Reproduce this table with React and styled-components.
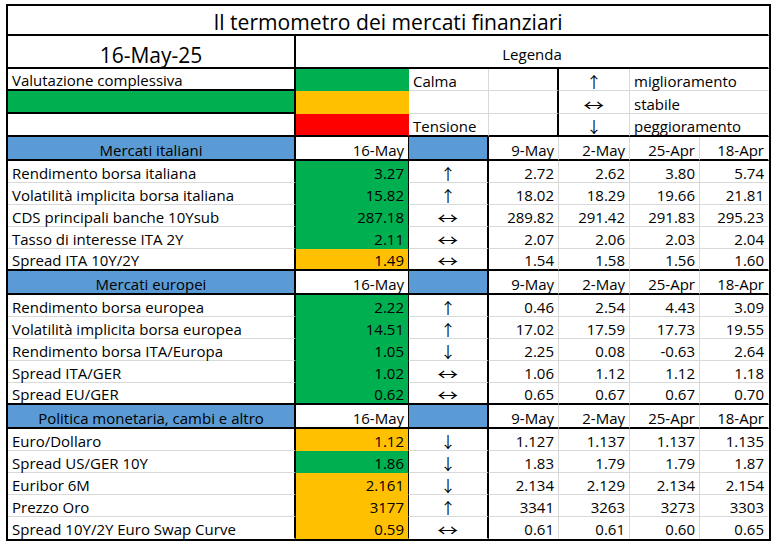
import React from "react";
import styled, { createGlobalStyle, css } from "styled-components";

const GlobalStyle = createGlobalStyle`
  html, body { margin: 0; padding: 0; background: #ffffff; }
  body { font-family: "Open Sans", Lato, "Liberation Sans", sans-serif; color: #000; }
`;

const GREEN = "#00b050";
const ORANGE = "#ffc000";
const RED = "#ff0000";
const BLUE = "#5b9bd5";
const GRID = "#d9d9d9";

const border = (kind) => {
  switch (kind) {
    case "thick":
      return "2px solid #000";
    case "thin":
      return "1px solid #000";
    case "grid":
      return `1px solid ${GRID}`;
    default:
      return "1px solid transparent";
  }
};

const sections = [
  {
    title: "Mercati italiani",
    rows: [
      ["Rendimento borsa italiana", "3.27", GREEN, "↑", ["2.72", "2.62", "3.80", "5.74"]],
      ["Volatilità implicita borsa italiana", "15.82", GREEN, "↑", ["18.02", "18.29", "19.66", "21.81"]],
      ["CDS principali banche 10Ysub", "287.18", GREEN, "↔", ["289.82", "291.42", "291.83", "295.23"]],
      ["Tasso di interesse ITA 2Y", "2.11", GREEN, "↔", ["2.07", "2.06", "2.03", "2.04"]],
      ["Spread ITA 10Y/2Y", "1.49", ORANGE, "↔", ["1.54", "1.58", "1.56", "1.60"]],
    ],
  },
  {
    title: "Mercati europei",
    rows: [
      ["Rendimento borsa europea", "2.22", GREEN, "↑", ["0.46", "2.54", "4.43", "3.09"]],
      ["Volatilità implicita borsa europea", "14.51", GREEN, "↑", ["17.02", "17.59", "17.73", "19.55"]],
      ["Rendimento borsa ITA/Europa", "1.05", GREEN, "↓", ["2.25", "0.08", "-0.63", "2.64"]],
      ["Spread ITA/GER", "1.02", GREEN, "↔", ["1.06", "1.12", "1.12", "1.18"]],
      ["Spread EU/GER", "0.62", GREEN, "↔", ["0.65", "0.67", "0.67", "0.70"]],
    ],
  },
  {
    title: "Politica monetaria, cambi e altro",
    rows: [
      ["Euro/Dollaro", "1.12", ORANGE, "↓", ["1.127", "1.137", "1.137", "1.135"]],
      ["Spread US/GER 10Y", "1.86", GREEN, "↓", ["1.83", "1.79", "1.79", "1.87"]],
      ["Euribor 6M", "2.161", ORANGE, "↓", ["2.134", "2.129", "2.134", "2.154"]],
      ["Prezzo Oro", "3177", ORANGE, "↑", ["3341", "3263", "3273", "3303"]],
      ["Spread 10Y/2Y Euro Swap Curve", "0.59", ORANGE, "↔", ["0.61", "0.61", "0.60", "0.65"]],
    ],
  },
];

const dates = ["9-May", "2-May", "25-Apr", "18-Apr"];

const rowTemplate = [
  "30px",
  "33px",
  "22px",
  "23px",
  "23px",
  ...sections.flatMap(() => ["24px", "22px", "22px", "22px", "22px", "22px"]),
].join(" ");

const Page = styled.div`
  padding: 4px 0 0 6px;
`;

const Sheet = styled.div`
  display: grid;
  grid-template-columns: 288px 113px 80px 70px 71px 70px 69px;
  grid-template-rows: ${rowTemplate};
  width: fit-content;
  border: 2px solid #000;
`;

const Cell = styled.div`
  box-sizing: border-box;
  display: flex;
  align-items: flex-end;
  justify-content: ${(p) =>
    p.$align === "right" ? "flex-end" : p.$align === "center" ? "center" : "flex-start"};
  padding: 0 4px 0 4px;
  font-size: 15px;
  line-height: 17px;
  white-space: nowrap;
  overflow: visible;
  background: ${(p) => p.$bg || "#fff"};
  border-right: ${(p) => border(p.$r)};
  border-bottom: ${(p) => border(p.$b)};
  ${(p) => p.$span && css`grid-column: span ${p.$span};`}
`;

const Title = styled(Cell)`
  grid-column: 1 / -1;
  justify-content: center;
  align-items: center;
  font-size: 21.1px;
  line-height: 26px;
  padding: 4px 0 0 0;
`;

const DateCell = styled(Cell)`
  justify-content: center;
  align-items: center;
  font-size: 21px;
  line-height: 26px;
  padding: 7px 0 0 0;
`;

const LegendHead = styled(Cell)`
  justify-content: center;
  align-items: center;
  padding: 6px 0 0 0;
`;

const Arrow = styled.span`
  display: inline-block;
  font-family: "Noto Sans CJK JP", "Noto Sans CJK SC", sans-serif;
  font-size: 15.5px;
  line-height: 16px;
  margin-bottom: 1px;
  transform: scaleX(${(p) => (p.$wide ? 1.35 : 1)});
`;

const Sym = ({ c }) => <Arrow $wide={c === "↔"}>{c}</Arrow>;

function App() {
  return (
    <>
      <GlobalStyle />
      <Page>
        <Sheet>
          <Title $b="thick">Il termometro dei mercati finanziari</Title>

          <DateCell $r="thick" $b="thick">16-May-25</DateCell>
          <LegendHead $span={6} $b="thick">Legenda</LegendHead>

          {/* Legend row 1 */}
          <Cell $r="thick" $b="thick">Valutazione complessiva</Cell>
          <Cell $bg={GREEN} $r="none" $b="none" />
          <Cell $r="grid" $b="grid">Calma</Cell>
          <Cell $r="thick" $b="grid" />
          <Cell $align="center" $r="grid" $b="grid"><Sym c="↑" /></Cell>
          <Cell $span={2} $b="grid">miglioramento</Cell>

          {/* Legend row 2 */}
          <Cell $bg={GREEN} $r="thick" $b="thick" />
          <Cell $bg={ORANGE} $r="none" $b="none" />
          <Cell $r="grid" $b="grid" />
          <Cell $r="thick" $b="grid" />
          <Cell $align="center" $r="grid" $b="grid"><Sym c="↔" /></Cell>
          <Cell $span={2} $b="grid">stabile</Cell>

          {/* Legend row 3 */}
          <Cell $r="thick" $b="thick" />
          <Cell $bg={RED} $r="none" $b="thick" />
          <Cell $r="grid" $b="thick">Tensione</Cell>
          <Cell $r="thick" $b="thick" />
          <Cell $align="center" $r="grid" $b="thick"><Sym c="↓" /></Cell>
          <Cell $span={2} $b="thick">peggioramento</Cell>

          {sections.map((s, si) => (
            <React.Fragment key={s.title}>
              <Cell $bg={BLUE} $align="center" $r="thick" $b="thick">{s.title}</Cell>
              <Cell $align="right" $r="thin" $b="thick">16-May</Cell>
              <Cell $bg={BLUE} $r="thick" $b="thick" />
              {dates.map((d, di) => (
                <Cell key={d} $align="right" $r={di < 3 ? "grid" : "none"} $b="thick">{d}</Cell>
              ))}
              {s.rows.map((r, ri) => {
                const last = ri === s.rows.length - 1;
                const isFinal = last && si === sections.length - 1;
                const bottom = isFinal ? "none" : last ? "thick" : "grid";
                return (
                  <React.Fragment key={r[0]}>
                    <Cell $r="thick" $b={bottom}>{r[0]}</Cell>
                    <Cell $bg={r[2]} $align="right" $r="thin" $b={last && !isFinal ? "thick" : "none"}>{r[1]}</Cell>
                    <Cell $align="center" $r="thick" $b={bottom}><Sym c={r[3]} /></Cell>
                    {r[4].map((v, vi) => (
                      <Cell key={vi} $align="right" $r={vi < 3 ? "grid" : "none"} $b={bottom}>{v}</Cell>
                    ))}
                  </React.Fragment>
                );
              })}
            </React.Fragment>
          ))}
        </Sheet>
      </Page>
    </>
  );
}

export default App;
